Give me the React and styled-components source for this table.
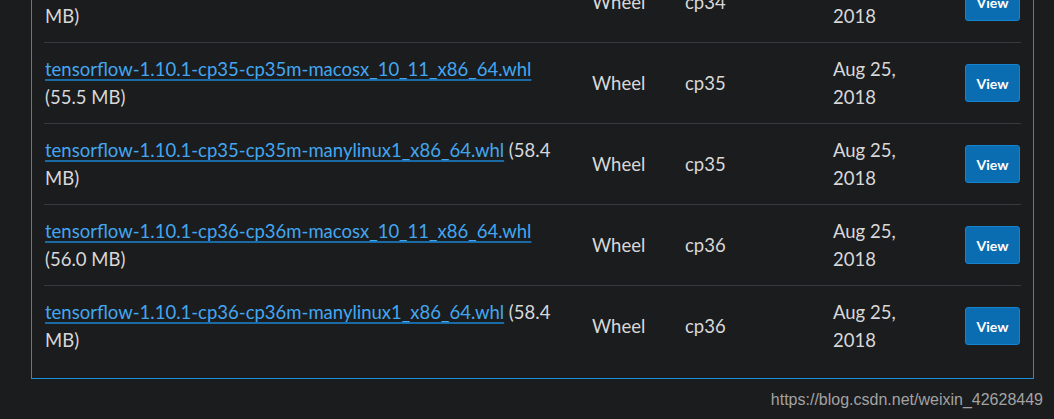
import React from "react";
import styled, { createGlobalStyle } from "styled-components";

const GlobalStyle = createGlobalStyle`
  html, body {
    margin: 0;
    padding: 0;
    background: #1b1c1e;
  }
`;

const Page = styled.div`
  width: 1054px;
  height: 419px;
  overflow: hidden;
  background: #1b1c1e;
  font-family: Lato, "Open Sans", sans-serif;
`;

const Panel = styled.section`
  box-sizing: border-box;
  width: 1003px;
  margin: -38px 0 0 31px;
  padding: 0 12px 12px 12px;
  border-left: 1px solid #1b8fdb;
  border-right: 1px solid #1b8fdb;
  border-bottom: 1px solid #1b8fdb;
`;

const Row = styled.div`
  display: grid;
  grid-template-columns: 548px 93px 148px 132px 55px;
  align-items: center;
  height: 80px;
  border-bottom: 1px solid #37393c;
  ${(p) => p.last && "border-bottom: none;"}
  font-size: 18.5px;
  line-height: 28px;
  color: #d8d8d8;
`;

const FileCell = styled.div`
  padding-left: 1px;
  padding-right: 22px;
`;

const FileLink = styled.a`
  color: #42a7f0;
  text-decoration: underline;
  text-decoration-color: #1a6aa6;
  text-decoration-thickness: 2px;
  text-underline-offset: 3px;
`;

const Cell = styled.div`
  max-width: ${(p) => p.max || "none"};
`;

const ViewButton = styled.button`
  box-sizing: border-box;
  width: 55px;
  height: 38px;
  border: 1px solid #1683cf;
  border-radius: 3px;
  background: #0a6db1;
  color: #ffffff;
  font-family: Lato, "Open Sans", sans-serif;
  font-weight: 700;
  font-size: 14px;
  padding: 0;
  cursor: pointer;
`;

const Watermark = styled.div`
  text-align: right;
  padding: 12px 11px 0 0;
  font-family: "Liberation Sans", Arial, sans-serif;
  font-size: 16px;
  color: #a3a3a3;
`;

const files = [
  { name: "tensorflow-1.10.1-cp34-cp34m-manylinux1_x86_64.whl", size: "58.3 MB", py: "cp34" },
  { name: "tensorflow-1.10.1-cp35-cp35m-macosx_10_11_x86_64.whl", size: "55.5 MB", py: "cp35" },
  { name: "tensorflow-1.10.1-cp35-cp35m-manylinux1_x86_64.whl", size: "58.4 MB", py: "cp35" },
  { name: "tensorflow-1.10.1-cp36-cp36m-macosx_10_11_x86_64.whl", size: "56.0 MB", py: "cp36" },
  { name: "tensorflow-1.10.1-cp36-cp36m-manylinux1_x86_64.whl", size: "58.4 MB", py: "cp36" },
];

const App = () => {
  return (
    <Page>
      <GlobalStyle />
      <Panel>
        {files.map((f, i) => (
          <Row key={f.name} last={i === files.length - 1}>
            <FileCell>
              <FileLink href="#">{f.name}</FileLink> ({f.size})
            </FileCell>
            <Cell>Wheel</Cell>
            <Cell>{f.py}</Cell>
            <Cell max="90px">Aug 25, 2018</Cell>
            <ViewButton>View</ViewButton>
          </Row>
        ))}
      </Panel>
      <Watermark>https://blog.csdn.net/weixin_42628449</Watermark>
    </Page>
  );
};

export default App;
